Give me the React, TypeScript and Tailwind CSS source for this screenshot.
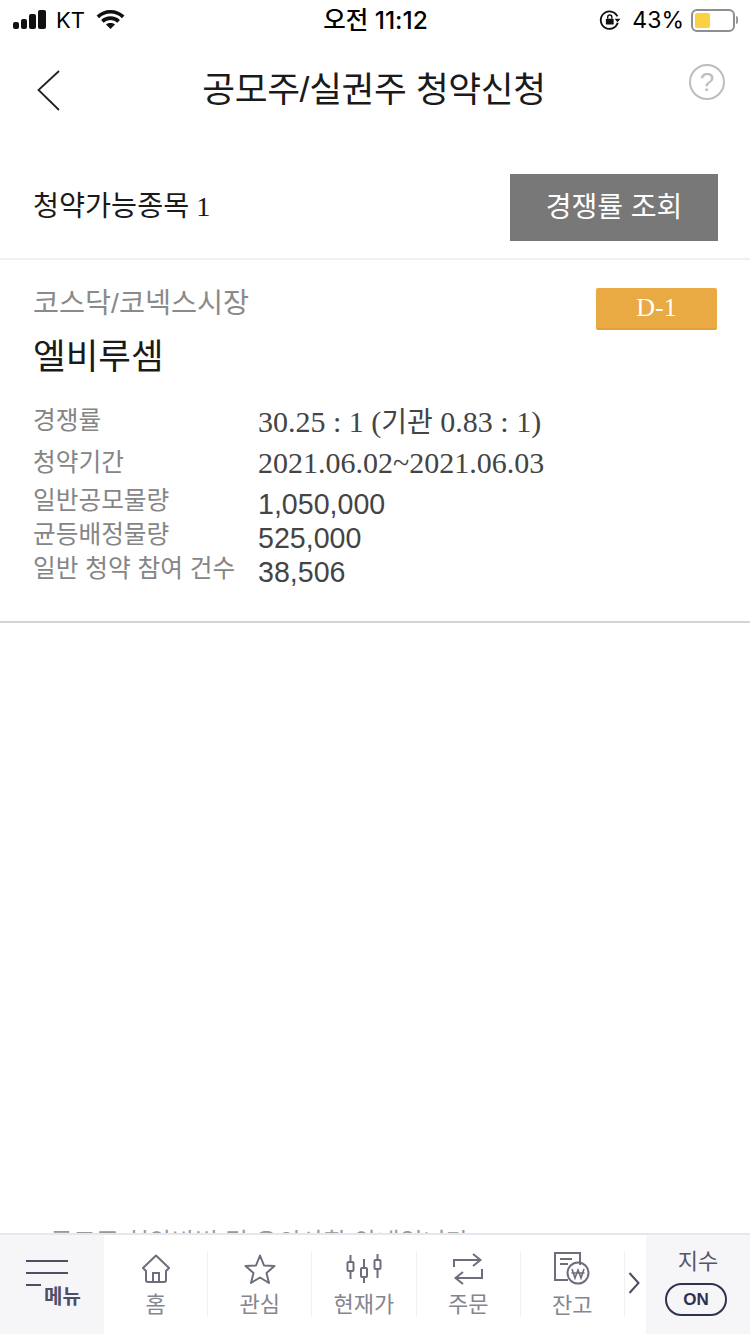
import React from "react";

const SERIF = "font-['Liberation_Serif','Noto_Sans_CJK_KR',serif]";
const SANS = "font-['Liberation_Sans','Noto_Sans_CJK_KR',sans-serif]";
const UI = "font-['Inter','Noto_Sans_CJK_KR',sans-serif]";

function StatusBar() {
  return (
    <div className={`h-[40px] shrink-0 flex items-center justify-between pl-[13px] pr-[12px] text-black ${UI}`}>
      <div className="flex items-center w-[200px]">
        <svg width="34" height="22" viewBox="0 0 34 22" fill="#111">
          <rect x="0" y="13" width="6" height="7" rx="2" />
          <rect x="8" y="10" width="6" height="10" rx="2" />
          <rect x="16" y="5" width="7" height="15" rx="2" />
          <rect x="25" y="1" width="8" height="19" rx="2" />
        </svg>
        <span className="text-[22px] leading-none ml-[9px] font-normal">KT</span>
        <svg width="29" height="22" viewBox="0 0 32 24" fill="none" className="ml-[11px]">
          <path d="M2 8.5 C10 1 22 1 30 8.5" stroke="#111" strokeWidth="4" />
          <path d="M7 13.5 C12 8.8 20 8.8 25 13.5" stroke="#111" strokeWidth="4" />
          <path d="M11 17 L16 22 L21 17 C18 14.8 14 14.8 11 17 Z" fill="#111" />
        </svg>
      </div>
      <div className="text-[24.5px] leading-none font-medium">오전 11:12</div>
      <div className="flex items-center justify-end w-[200px]">
        <svg width="22" height="22" viewBox="0 0 24 24" fill="none">
          <path d="M20 8 A9.5 9.5 0 1 0 20.5 15" stroke="#111" strokeWidth="2" />
          <path d="M17 10.5 L23.5 10.5 L20.2 14.5 Z" fill="#111" />
          <rect x="7.5" y="10.5" width="8.5" height="6.5" rx="1" fill="#111" />
          <path d="M9.5 10.5 V8.8 A2.2 2.2 0 0 1 14 8.8 V10.5" stroke="#111" strokeWidth="1.5" />
        </svg>
        <span className="text-[23px] leading-none ml-[11px]">43%</span>
        <div className="ml-[7px] flex items-center">
          <div className="w-[44px] h-[23px] rounded-[6px] border-2 border-[#8e8e8e] p-[2px] flex">
            <div className="w-[15px] h-full rounded-[2px] bg-[#fbd143]" />
          </div>
          <div className="w-[2px] h-[8px] rounded-r-[2px] bg-[#9a9a9a] ml-[1px]" />
        </div>
      </div>
    </div>
  );
}

function Header() {
  return (
    <div className="relative h-[100px] shrink-0 flex items-center justify-center pt-[1px] pr-[2px]">
      <svg width="26" height="44" viewBox="0 0 26 44" fill="none" className="absolute left-[36px] top-[29px]">
        <path d="M23 2 L2.5 21 L23 41" stroke="#222" strokeWidth="1.8" />
      </svg>
      <h1 className={`text-[35.7px] leading-none font-normal text-[#1a1a1a] tracking-[-0.4px] ${SANS}`}>공모주/실권주 청약신청</h1>
      <div className={`absolute left-[689px] top-[24px] w-[36px] h-[36px] rounded-full border-[2.5px] border-[#bdbdbd] flex items-center justify-center text-[26px] leading-none text-[#bdbdbd] ${SANS}`}>?</div>
    </div>
  );
}

function Row({ label, value, labelClass, valueClass }: { label: string; value: React.ReactNode; labelClass: string; valueClass: string }) {
  return (
    <div className={`flex items-center ${labelClass}`}>
      <div className="w-[225px] shrink-0 text-[24.7px] leading-none text-[#858585] font-['Liberation_Sans','Noto_Sans_CJK_KR',sans-serif] whitespace-nowrap">{label}</div>
      <div className={`text-[#444444] whitespace-nowrap leading-none ${valueClass}`}>{value}</div>
    </div>
  );
}

function Card() {
  return (
    <div className="h-[363px] shrink-0 border-b-2 border-[#d4d4d4] px-[33px] pt-[28px]">
      <div className="flex items-start justify-between">
        <div>
          <div className={`text-[28.3px] leading-[30px] text-[#8a8a8a] ${SANS}`}>코스닥/코넥스시장</div>
          <div className={`mt-[19px] text-[35.5px] leading-[40px] text-[#1a1a1a] ${SANS}`}>엘비루셈</div>
        </div>
        <div className={`w-[121px] h-[42px] rounded-[2px] bg-[#e9a943] border-b-2 border-[#e3a03a] flex items-center justify-center text-[26px] leading-none text-white ${SERIF}`}>D-1</div>
      </div>
      <div className="mt-[23px] flex flex-col">
        <Row
          label="경쟁률"
          value={<>30.25 : 1 (<span className="text-[28px]">기관</span> 0.83 : 1)</>}
          labelClass="h-[42px]"
          valueClass={`text-[30px] pt-[2px] ${SERIF}`}
        />
        <Row label="청약기간" value="2021.06.02~2021.06.03" labelClass="h-[42px]" valueClass={`text-[30px] pt-[0px] ${SERIF}`} />
        <Row label="일반공모물량" value="1,050,000" labelClass="h-[34px]" valueClass={`text-[28.6px] pt-[6px] ${SANS}`} />
        <Row label="균등배정물량" value="525,000" labelClass="h-[34px]" valueClass={`text-[28.6px] pt-[6px] ${SANS}`} />
        <Row label="일반 청약 참여 건수" value="38,506" labelClass="h-[34px]" valueClass={`text-[28.6px] pt-[6px] ${SANS}`} />
      </div>
    </div>
  );
}

const navStroke = "#6d6d7c";

function HomeIcon() {
  return (
    <svg width="30" height="32" viewBox="0 0 30 32" fill="none" stroke={navStroke} strokeWidth="2">
      <path d="M2 15 L15 2.5 L28 15 L25 18 V27 Q25 29 23 29 L7 29 Q5 29 5 27 V18 Z" strokeLinejoin="round" />
      <path d="M12 29 V20 H18 V29" />
    </svg>
  );
}
function StarIcon() {
  return (
    <svg width="32" height="32" viewBox="0 0 32 32" fill="none" stroke={navStroke} strokeWidth="2">
      <path d="M16 2.5 L20 12.5 L30.5 13 L22.5 20 L25 30 L16 24.5 L7 30 L9.5 20 L1.5 13 L12 12.5 Z" strokeLinejoin="round" />
    </svg>
  );
}
function CandleIcon() {
  return (
    <svg width="36" height="30" viewBox="0 0 36 30" fill="none" stroke={navStroke} strokeWidth="2">
      <rect x="1.5" y="8" width="6" height="9" rx="1" />
      <path d="M4.5 1 V8 M4.5 17 V25" />
      <rect x="15" y="14" width="6" height="9" rx="1" />
      <path d="M18 5 V14 M18 23 V29" />
      <rect x="28.5" y="6" width="6" height="9" rx="1" />
      <path d="M31.5 0 V6 M31.5 15 V24" />
    </svg>
  );
}
function SwapIcon() {
  return (
    <svg width="30" height="32" viewBox="0 0 30 32" fill="none" stroke={navStroke} strokeWidth="2">
      <path d="M1 14 V7 H27 M20 1 L27.5 7 L20 13" />
      <path d="M29 16 V25 H3 M10 19 L2.5 25 L10 31" />
    </svg>
  );
}
function BalanceIcon() {
  return (
    <svg width="36" height="34" viewBox="0 0 36 34" fill="none" stroke={navStroke} strokeWidth="2">
      <path d="M14 28 H1 V1 H26 V13" />
      <path d="M6 7 H18 M6 12 H14" />
      <circle cx="24" cy="21" r="10.5" />
      <path d="M18 17 L21 26 L24 18 L27 26 L30 17 M17.5 21 H30.5" strokeWidth="1.6" />
    </svg>
  );
}

function NavItem({ icon, label }: { icon: React.ReactNode; label: string }) {
  return (
    <div className="w-[104.2px] h-[64px] mt-[17px] border-r border-[#f1f1f3] flex flex-col items-center">
      <div className="h-[36px] flex items-center justify-center">{icon}</div>
      <div className={`mt-[9px] text-[22px] leading-none text-[#85858f] ${SANS}`}>{label}</div>
    </div>
  );
}

function BottomNav() {
  return (
    <div className="h-[101px] shrink-0 border-t-2 border-[#e6e6ec] bg-white flex">
      <div className="w-[104px] bg-[#f6f6f8] pl-[26px] pt-[25px]">
        <div className="w-[42px] h-[2px] bg-[#4e4e68]" />
        <div className="w-[42px] h-[2px] bg-[#4e4e68] mt-[10px]" />
        <div className="flex items-start mt-[10px]">
          <div className="w-[15px] h-[2px] bg-[#4e4e68]" />
          <div className={`ml-[3px] mt-[2px] text-[20px] leading-[22px] font-bold text-[#4e4e68] ${SANS}`}>메뉴</div>
        </div>
      </div>
      <NavItem icon={<HomeIcon />} label="홈" />
      <NavItem icon={<StarIcon />} label="관심" />
      <NavItem icon={<CandleIcon />} label="현재가" />
      <NavItem icon={<SwapIcon />} label="주문" />
      <NavItem icon={<BalanceIcon />} label="잔고" />
      <div className="flex-1 flex justify-center pt-[36px] pr-[2px]">
        <svg width="12" height="24" viewBox="0 0 12 24" fill="none" className="shrink-0">
          <path d="M1.5 2 L10.5 12 L1.5 22" stroke="#4e4e60" strokeWidth="2" />
        </svg>
      </div>
      <div className="w-[104px] shrink-0 bg-[#f6f6f8] flex flex-col items-center pt-[14px]">
        <div className={`text-[22px] leading-[26px] text-[#55556a] ${SANS}`}>지수</div>
        <div className={`mt-[8px] mr-[4px] w-[62px] h-[33px] rounded-full border-2 border-[#2f3150] flex items-center justify-center text-[17px] font-bold leading-none text-[#2f3150] ${SANS}`}>ON</div>
      </div>
    </div>
  );
}

export default function App() {
  return (
    <div className="w-[750px] h-[1334px] bg-white flex flex-col overflow-hidden">
      <StatusBar />
      <Header />
      <div className="h-[120px] shrink-0 border-b-2 border-[#f0f0f0] flex items-start justify-between pl-[33px] pr-[32px] pt-[34px]">
        <div className={`h-[67px] flex items-center text-[28.3px] leading-none text-[#1a1a1a] ${SERIF}`}>청약가능종목 1</div>
        <div className={`w-[208px] h-[67px] bg-[#787878] flex items-center justify-center text-[28px] leading-none text-white ${SANS}`}>경쟁률 조회</div>
      </div>
      <Card />
      <div className="flex-1 overflow-hidden relative">
        <div className={`absolute left-[50px] bottom-[-24px] text-[25px] leading-[30px] text-[#999] whitespace-nowrap ${SANS}`}>공모주 청약방법 및 유의사항 안내입니다</div>
      </div>
      <BottomNav />
    </div>
  );
}
